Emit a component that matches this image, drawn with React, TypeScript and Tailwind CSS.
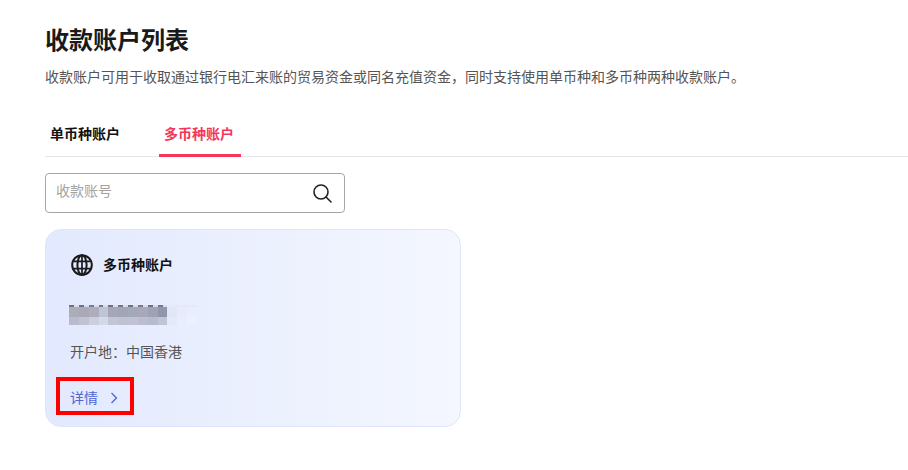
import * as React from 'react';

const FONT = { fontFamily: '"Liberation Sans", "Noto Sans CJK SC", sans-serif' };

// mosaic cells of the blurred account number
const tipCells = ['#6f7080', '#d8dcef', '#6f7080', '#d8dcef', '#7a7b8a', '#d8dcef', '#777888', '#d8dcef', '#6f7080', '#d8dcef', '#747586', '#d8dcef', '#6f7080', '#d8dcef', '#7a7b8a', '#d8dcef', '#6f7080', '#d8dcef', '#777888', '#d8dcef', '#e5e9fa', '#e5e9fa', '#e5e9fa', '#e5e9fa', '#e5e9fa', '#e5e9fa'];
const topCells = ['#adadba', '#a9a9b8', '#adadbd', '#c0c5d6', '#a6a7b6', '#a2a5b8', '#a4a8bb', '#a7a9ba', '#9ea2b4', '#9097aa', '#e2e6f7', '#e8ebfb', '#eaeefc'];
const bottomCells = ['#b9bbcc', '#c1c3d4', '#cacfe0', '#d3d9ea', '#c3c4d6', '#bfc2d3', '#c0c3d4', '#bcbecf', '#b8bbcc', '#c0c4d5', '#e5e9f9', '#eaedfc', '#edf0fd'];

function BlurredNumber() {
  return (
    <div className="flex flex-col w-[128px] h-[20px] ml-[-1px]">
      <div className="flex h-[2px]">
        {tipCells.map((c, i) => (
          <div key={i} className="flex-1" style={{ backgroundColor: c }} />
        ))}
      </div>
      <div className="flex h-[10px]">
        {topCells.map((c, i) => (
          <div key={i} className="flex-1" style={{ backgroundColor: c }} />
        ))}
      </div>
      <div className="flex h-[8px]">
        {bottomCells.map((c, i) => (
          <div key={i} className="flex-1" style={{ backgroundColor: c }} />
        ))}
      </div>
    </div>
  );
}

function GlobeIcon() {
  return (
    <svg width="22" height="22" viewBox="0 0 22 22" fill="none" stroke="#1a1a1a" strokeWidth="2">
      <circle cx="11" cy="11" r="9.8" />
      <ellipse cx="11" cy="11" rx="4.6" ry="9.8" />
      <path d="M2.2 7.4h17.6M2.2 14.6h17.6M11 1v20" strokeWidth="1.7" />
    </svg>
  );
}

function SearchIcon() {
  return (
    <svg width="20" height="20" viewBox="0 0 20 20" fill="none" stroke="#222" strokeWidth="1.6">
      <circle cx="9" cy="9" r="7" />
      <path d="M14 14l5 5" strokeLinecap="round" />
    </svg>
  );
}

export default function App() {
  return (
    <div className="w-[908px] h-[470px] bg-white overflow-hidden pl-[45px] pt-[25px]" style={FONT}>
      {/* Header */}
      <h1 className="text-[24px] leading-[32px] font-bold text-[#1a1a1a]">收款账户列表</h1>
      <p className="mt-[10px] text-[14px] leading-[20px] text-[#555]">
        收款账户可用于收取通过银行电汇来账的贸易资金或同名充值资金，同时支持使用单币种和多币种两种收款账户。
      </p>

      {/* Tabs */}
      <div className="mt-[23px] flex h-[47px] border-b border-[#e5e5e5] text-[14px] font-bold">
        <div className="w-[82px] pl-[5px] pt-[14px] leading-[20px] text-[#111]">单币种账户</div>
        <div className="ml-[32px] w-[82px] h-[47px] pl-[5px] pt-[14px] leading-[20px] text-[#f5365c] border-b-[3px] border-[#f5365c]">
          多币种账户
        </div>
      </div>

      {/* Search */}
      <div className="mt-[16px] w-[300px] h-[40px] flex items-center justify-between pl-[10px] pr-[12px] border border-[#a6a6a6] rounded-[4px]">
        <span className="pb-[3px] text-[14px] text-[#a3a3a3]">收款账号</span>
        <SearchIcon />
      </div>

      {/* Card */}
      <div className="relative mt-[16px] w-[416px] h-[198px] rounded-[16px] border border-[#dfe6fb] bg-gradient-to-r from-[#e3e9fe] to-[#f4f7ff] pl-[24px]">
        <div className="flex items-center gap-[10px] pl-[1px] pt-[24px]">
          <GlobeIcon />
          <span className="text-[14px] leading-[22px] font-bold text-[#111]">多币种账户</span>
        </div>
        <div className="mt-[29px]">
          <BlurredNumber />
        </div>
        <div className="mt-[17px] text-[14px] leading-[20px] text-[#555]">开户地：中国香港</div>
        <div className="mt-[26px] flex items-center gap-[12px] text-[14px] leading-[20px] text-[#4d65d6]">
          <span>详情</span>
          <svg width="8" height="12" viewBox="0 0 8 12" fill="none" stroke="#4d65d6" strokeWidth="1.3">
            <path d="M1.5 1l5 5-5 5" />
          </svg>
        </div>
        {/* red annotation box */}
        <div className="absolute left-[10px] top-[147px] w-[78px] h-[38px] border-[4px] border-[#ff0000]" />
      </div>
    </div>
  );
}
